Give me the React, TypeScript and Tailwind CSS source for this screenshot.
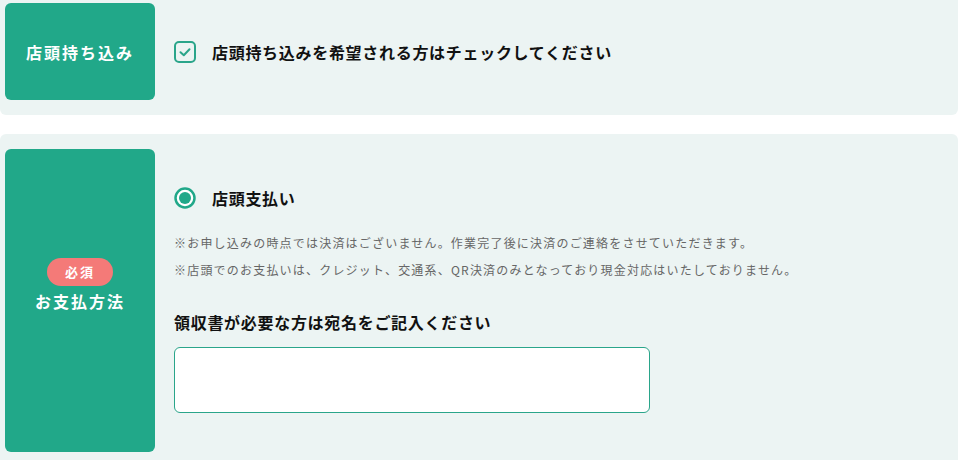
import React from "react";

const font = { fontFamily: '"Noto Sans CJK JP", "Noto Sans", sans-serif' };

const Label: React.FC<{ children: React.ReactNode; className?: string }> = ({
  children,
  className = "",
}) => (
  <div
    className={`w-[150px] shrink-0 rounded-md bg-[#21a889] text-white flex flex-col items-center justify-center ${className}`}
  >
    {children}
  </div>
);

const CheckIcon = () => (
  <svg width="22" height="22" viewBox="0 0 22 22" aria-hidden="true">
    <rect x="1" y="1" width="20" height="20" rx="4" fill="none" stroke="#2aa58a" strokeWidth="2" />
    <path d="M6.5 11.2 L9.8 14.2 L15.5 8.2" fill="none" stroke="#2aa58a" strokeWidth="2" strokeLinecap="round" strokeLinejoin="round" />
  </svg>
);

const RadioIcon = () => (
  <svg width="22" height="22" viewBox="0 0 22 22" aria-hidden="true">
    <circle cx="11" cy="11" r="9.5" fill="#fff" stroke="#21a889" strokeWidth="2.5" />
    <circle cx="11" cy="11" r="6" fill="#21a889" />
  </svg>
);

export default function App() {
  return (
    <div className="w-[958px] h-[460px] overflow-hidden bg-white" style={font}>
      {/* 店頭持ち込み */}
      <div className="-mt-[12px] flex rounded-md bg-[#ecf4f3] pl-[5px] pt-[15px] pb-[15px]">
        <Label className="h-[97px]">
          <span className="text-[16px] font-bold tracking-[2px]">店頭持ち込み</span>
        </Label>
        <div className="flex items-center gap-[16px] pl-[19px]">
          <CheckIcon />
          <span className="text-[16px] font-bold tracking-[0.7px] text-[#111]">
            店頭持ち込みを希望される方はチェックしてください
          </span>
        </div>
      </div>

      {/* お支払方法 */}
      <div className="mt-[19px] flex rounded-md bg-[#ecf4f3] pl-[5px] pt-[15px] pb-[15px]">
        <Label className="h-[303px] pb-[30px]">
          <span className="rounded-full bg-[#f47a78] w-[66px] h-[28px] flex items-center justify-center text-[13px] font-bold tracking-[2px]">
            必須
          </span>
          <span className="mt-[2px] text-[16px] font-bold tracking-[2px] leading-[26px]">お支払方法</span>
        </Label>
        <div className="flex flex-col pl-[19px] pt-[37px]">
          <div className="flex items-center gap-[16px]">
            <RadioIcon />
            <span className="text-[16px] font-bold tracking-[0.7px] text-[#111]">店頭支払い</span>
          </div>
          <div className="mt-[19px] text-[12px] leading-[27px] tracking-[1.2px] text-[#666]">
            <p>※お申し込みの時点では決済はございません。作業完了後に決済のご連絡をさせていただきます。</p>
            <p>※店頭でのお支払いは、クレジット、交通系、QR決済のみとなっており現金対応はいたしておりません。</p>
          </div>
          <p className="mt-[27px] text-[16px] font-bold tracking-[0.7px] text-[#111] leading-[24px]">
            領収書が必要な方は宛名をご記入ください
          </p>
          <textarea className="mt-[13px] w-[476px] h-[66px] rounded-md border border-[#2aa58a] bg-white resize-none outline-none" />
        </div>
      </div>
    </div>
  );
}
